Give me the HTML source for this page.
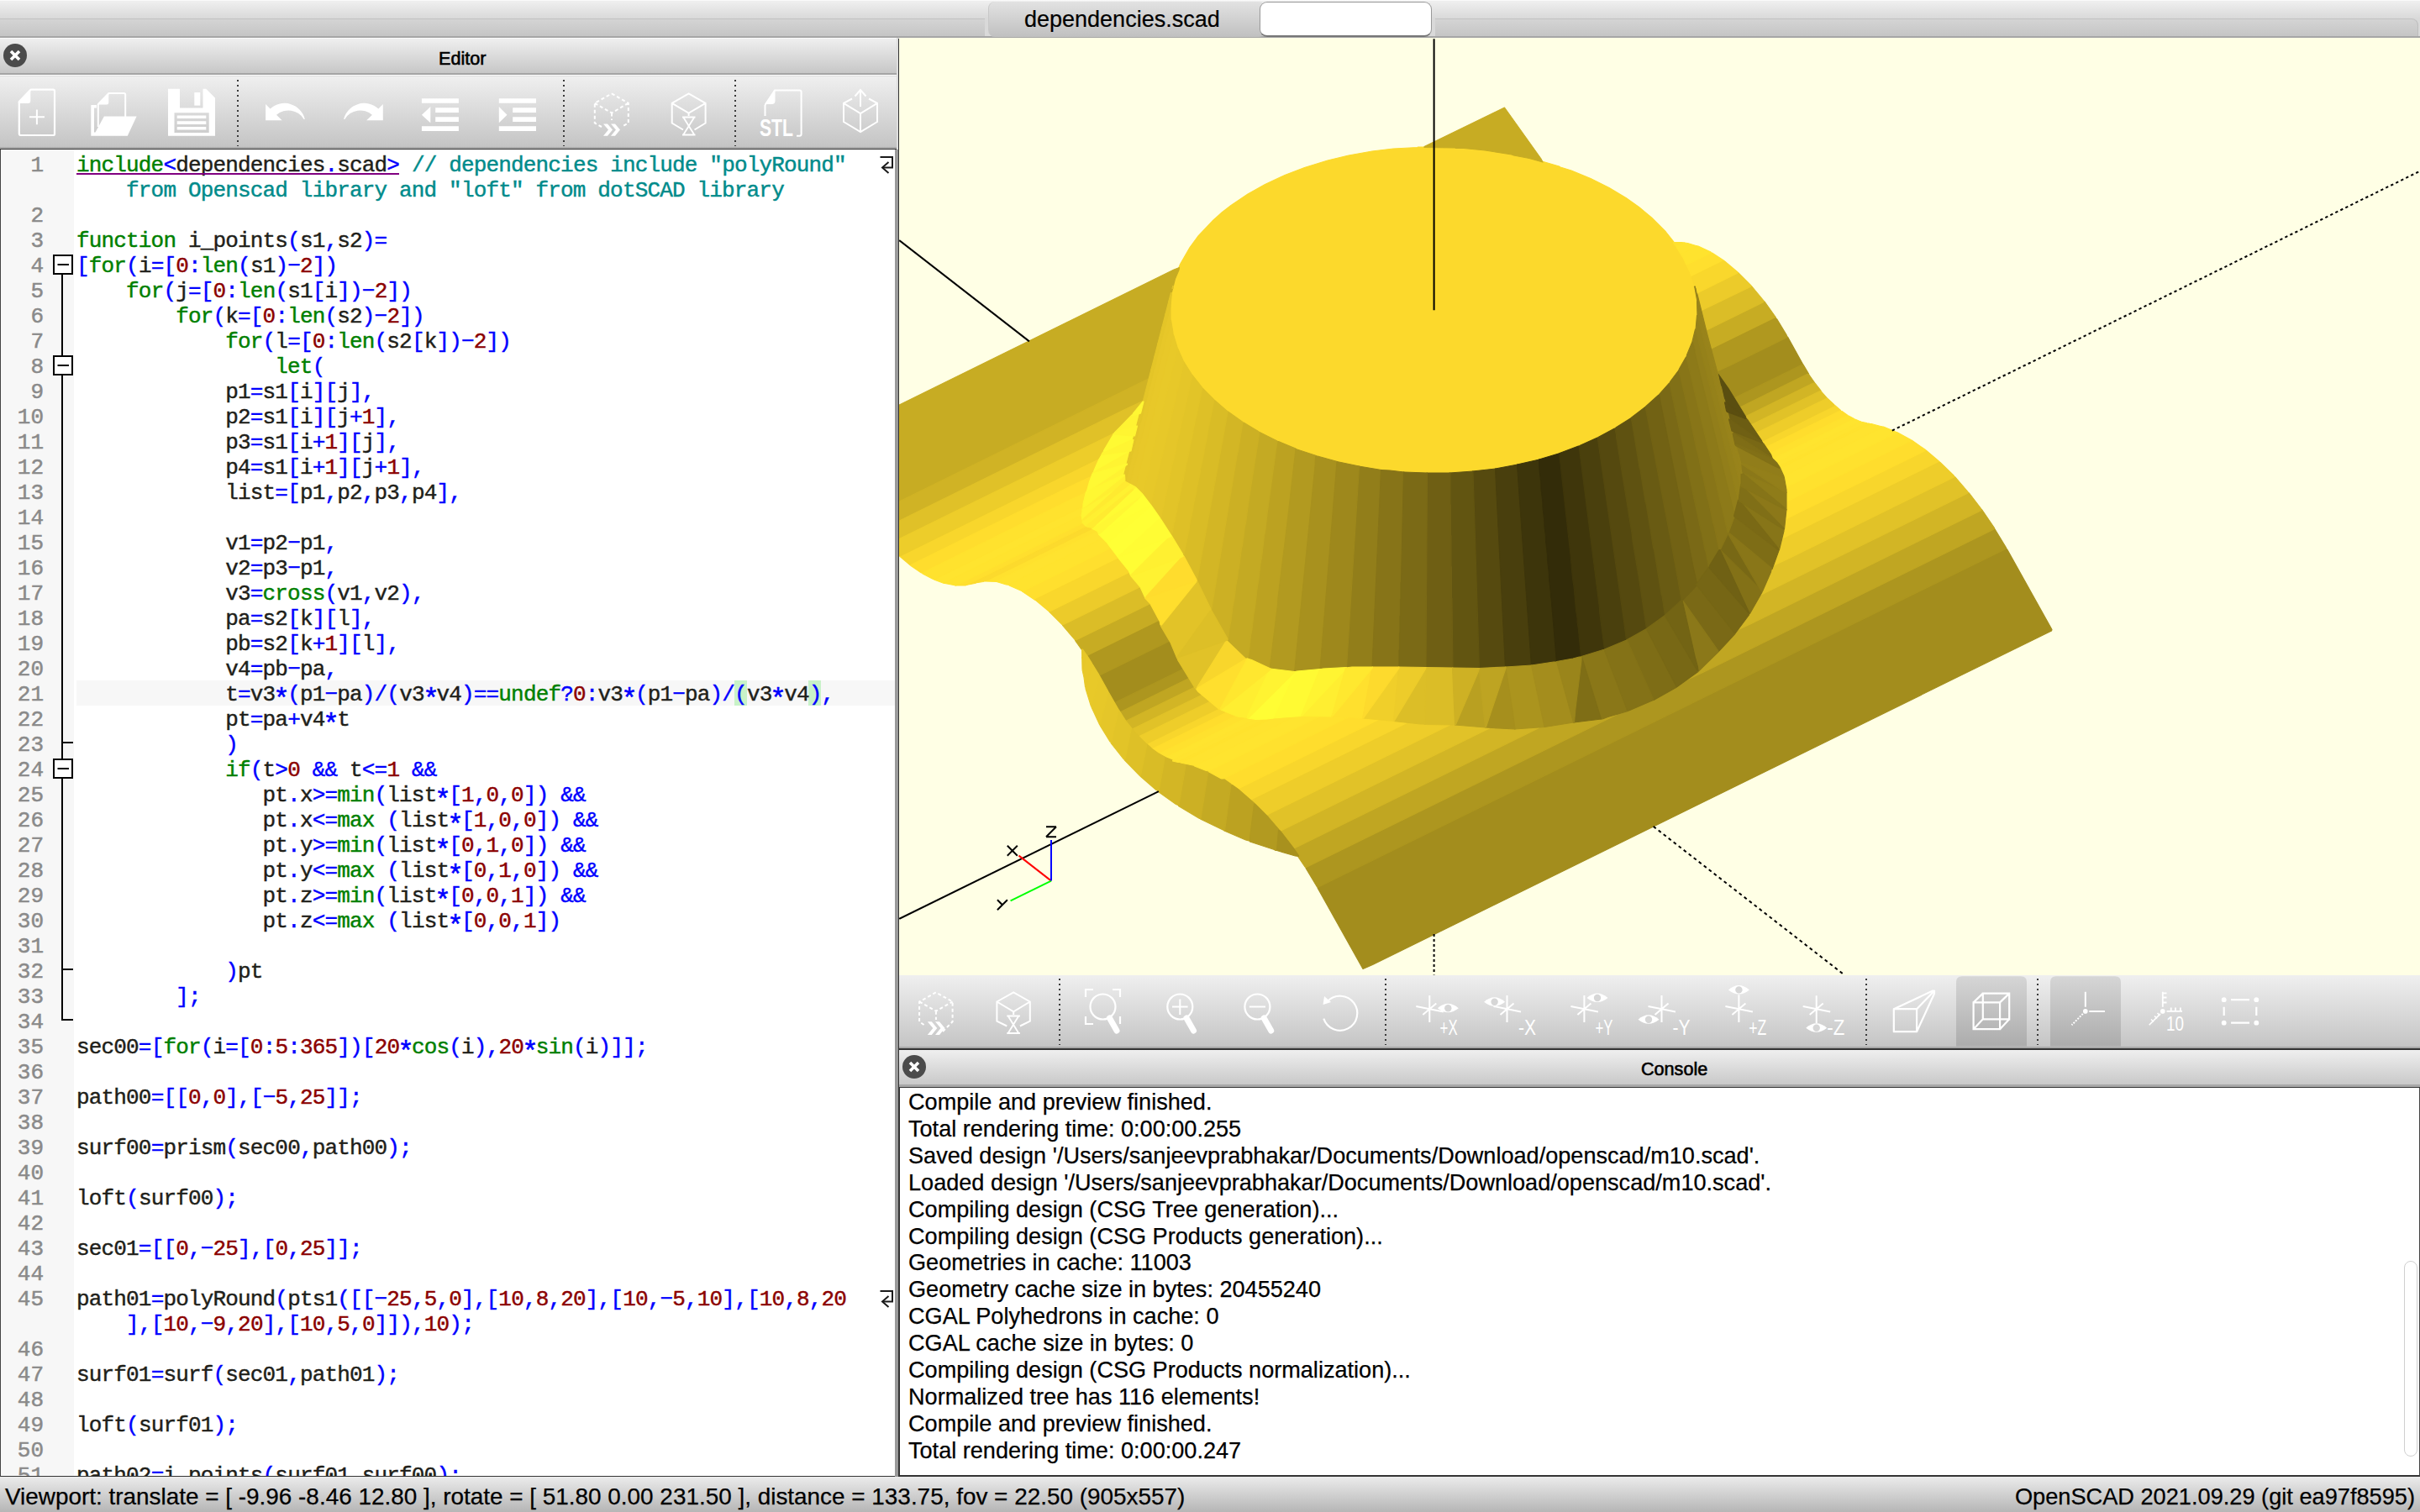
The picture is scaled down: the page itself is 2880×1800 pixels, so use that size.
<!DOCTYPE html><html><head><meta charset="utf-8"><style>
*{margin:0;padding:0;box-sizing:border-box}
body{width:2880px;height:1800px;overflow:hidden;position:relative;background:#e6e6e6;font-family:"Liberation Sans",sans-serif;color:#000}
.a{position:absolute}
.grad{background:linear-gradient(#efefef,#c6c6c6)}
.code{font-family:"Liberation Mono",monospace;font-size:26px;letter-spacing:-0.8323px;white-space:pre;color:#1f1f1a;line-height:30px;-webkit-text-stroke:0.45px currentColor}
.code i{font-style:normal}
.ast{display:inline-block;transform:translateY(6.5px) scale(1.25)}
.kw{color:#008000} .op{color:#0000ff} .num{color:#8b0000} .cm{color:#008b8b}
.ln{font-family:"Liberation Mono",monospace;font-size:26px;color:#8a8a8a;text-align:right;width:51px;white-space:pre;line-height:30px;-webkit-text-stroke:0.5px #8a8a8a}
.cons{font-size:27.1px;line-height:31.9px;white-space:pre;color:#000;-webkit-text-stroke:0.25px #000}
.stat{font-size:27.9px;white-space:pre;color:#000;-webkit-text-stroke:0.25px #000}
.title{font-size:21.6px;color:#000;white-space:pre;-webkit-text-stroke:0.6px #000}
</style></head><body><div class="a" style="left:0;top:0;width:2880px;height:45px;background:linear-gradient(#ffffff 0px,#efefef 1.5px,#d9d9d9 22px,#d9d9d9 45px)"></div>
<div class="a" style="left:0;top:22px;width:1172px;height:22px;background:linear-gradient(#d4d4d4,#c4c4c4);border-top:1px solid #c2c2c2"></div>
<div class="a" style="left:1708px;top:22px;width:1170px;height:22px;background:linear-gradient(#d4d4d4,#c4c4c4);border-top:1px solid #c2c2c2;border-right:1px solid #bdbdbd;border-top-right-radius:8px"></div>
<div class="a" style="left:0;top:43px;width:2880px;height:2px;background:#a6a6a6"></div>
<div class="a" style="left:1176px;top:2px;width:330px;height:42px;border-radius:8px;background:linear-gradient(#e2e2e2,#c0c0c0);border-left:1px solid #c8c8c8"></div>
<div class="a" style="left:1499px;top:2px;width:205px;height:42px;border-radius:9px;background:#fff;border:1.5px solid #999;border-bottom:2px solid #777"></div>
<div class="a" style="left:1219px;top:8px;font-size:27px;-webkit-text-stroke:0.2px #000;white-space:pre">dependencies.scad</div>
<div class="a" style="left:0;top:45px;width:1070px;height:1713px;background:#ddd"></div>
<div class="a grad" style="left:0;top:45px;width:1067px;height:43px;border-top:1px solid #fafafa"></div>
<div class="a" style="left:0;top:87px;width:1067px;height:3px;background:#a4a4a4;border-bottom:1px solid #fff"></div>
<div class="a grad" style="left:0;top:91px;width:1067px;height:85px;background:linear-gradient(#efefef,#c4c4c4)"></div>
<div class="a" style="left:0;top:175px;width:1067px;height:3px;background:#aaa;border-bottom:1.5px solid #333"></div>
<div class="a" style="left:4px;top:52px;width:28px;height:28px;border-radius:50%;background:#4b4b4b"></div>
<svg class="a" style="left:4px;top:52px" width="28" height="28"><path d="M9 9 L19 19 M19 9 L9 19" stroke="#fff" stroke-width="3.6"/></svg>
<div class="a title" style="left:522px;top:56.5px">Editor</div>
<svg class="a" style="left:0;top:0" width="1070" height="180"><path d="M22.8 121 L36.6 106.7 H63 Q65 106.7 65 108.7 V159.8 Q65 161 63 161 H24.8 Q22.8 161 22.8 159 Z" fill="none" stroke="#ffffff" stroke-width="2.2" stroke-linejoin="round"/><path d="M21.8 121 L36.3 105.7 V120 Q36.3 123 33.5 123 H21.8 Z" fill="#ffffff"/><path d="M35 139.3 H53 M43.9 130.5 V148.3" stroke="#ffffff" stroke-width="2"/><path d="M116.8 124 L129.5 111 H147.5 Q149.2 111 149.2 112.7 V139" fill="none" stroke="#ffffff" stroke-width="2"/><path d="M115.8 124 L129.3 110 V122 Q129.3 124.5 126.8 124.5 H115.8 Z" fill="#ffffff"/><path d="M116.8 124 V151" stroke="#ffffff" stroke-width="2"/><path d="M108.3 125 H115 V128.5 H112 V157.5 H113.5 L123.9 138.5 H162.6 L151.8 161.8 H108.3 Z" fill="#ffffff"/><path d="M200 105.7 H214 V128.5 H241.5 V105.7 H245.3 L256 116.5 V161.8 H200 Z M207.5 134.2 V157.9 H248.7 V134.2 Z" fill="#ffffff" fill-rule="evenodd"/><rect x="231.3" y="110" width="7" height="15.6" fill="#ffffff"/><path d="M210.7 137.4 h34.6 v3.6 h-34.6 Z M210.7 144.2 h34.6 v3.7 h-34.6 Z M210.7 151 h34.6 v3.6 h-34.6 Z" fill="#ffffff"/><line x1="283" y1="95" x2="283" y2="174" stroke="#3a3a3a" stroke-width="2" stroke-dasharray="2 4"/><path d="M316.1 124 L321.6 129.4 A 25 25 0 0 1 362.8 141.9 L361.6 141.9 A 21.5 21.5 0 0 0 329 136.7 L335.7 143.3 L316.1 143.3 Z" fill="#ffffff"/><path d="M316.1 124 L321.6 129.4 A 25 25 0 0 1 362.8 141.9 L361.6 141.9 A 21.5 21.5 0 0 0 329 136.7 L335.7 143.3 L316.1 143.3 Z" fill="#ffffff" transform="translate(771.9 0) scale(-1 1)"/><path d="M501.9 117.3 h44 v5.5 h-44 Z M501.9 150.3 h44 v5.7 h-44 Z M518.2 128.2 h27.7 v5.8 h-27.7 Z M518.2 139.2 h27.7 v5.8 h-27.7 Z M512.3 127 V146.3 L501.9 136.7 Z" fill="#ffffff"/><path d="M593.8 117.3 h44.2 v5.5 h-44.2 Z M593.8 150.3 h44.2 v5.7 h-44.2 Z M610.2 128.2 h27.8 v5.8 h-27.8 Z M610.2 139.2 h27.8 v5.8 h-27.8 Z M593.8 127 V146.3 L603.5 136.7 Z" fill="#ffffff"/><line x1="671" y1="95" x2="671" y2="174" stroke="#3a3a3a" stroke-width="2" stroke-dasharray="2 4"/><path d="M728 111.4 L747.8 122.8 V146.5 L740 151 M716 151 L707.8 146.5 V122.8 L728 111.4 M707.8 122.8 L728 134.4 L747.8 122.8 M728 134.4 V143" fill="none" stroke="#ffffff" stroke-width="2" stroke-dasharray="4 3"/><path d="M718 147.5 h5 l6 7 l-6 7.2 h-5 l6 -7.2 Z M727 147.5 h5 l6 7 l-6 7.2 h-5 l6 -7.2 Z" fill="#ffffff"/><path d="M813 154.5 L799.7 146.5 V122.8 L819.6 111.4 L839.6 122.8 V146.5 L826.5 154.5 M799.7 122.8 L819.6 134.6 L839.6 122.8 M819.6 134.6 V138" fill="none" stroke="#ffffff" stroke-width="2"/><path d="M812 139.5 H827.5 M812 160.5 H827.5 M813.5 140 L826 160 M826 140 L813.5 160" stroke="#ffffff" stroke-width="1.8" fill="none"/><line x1="875" y1="95" x2="875" y2="174" stroke="#3a3a3a" stroke-width="2" stroke-dasharray="2 4"/><path d="M910.5 125 L922 107.6 H951.6 Q953.6 107.6 953.6 109.6 V159.7 Q953.6 161.7 951.6 161.7 H948" fill="none" stroke="#ffffff" stroke-width="2"/><path d="M910 124 L922.5 107 V120 Q922.5 124 918.5 124 Z" fill="#ffffff"/><path d="M910.5 125 V138" stroke="#ffffff" stroke-width="2"/><text x="904" y="161.7" font-family="Liberation Sans" font-weight="bold" font-size="29" fill="#ffffff" textLength="40" lengthAdjust="spacingAndGlyphs">STL</text><path d="M1014 117.5 L1004 122.8 V145 L1024 157 L1044 145 V122.8 L1034 117.5 M1004 122.8 L1024 135 L1044 122.8 M1024 135 V157 M1024 127 V108.5" fill="none" stroke="#ffffff" stroke-width="2"/><path d="M1017.5 114.5 L1024 107 L1030.5 114.5" fill="none" stroke="#ffffff" stroke-width="2"/></svg>
<div class="a" style="left:0;top:178px;width:1069px;height:1581px;background:#fff;border-left:1.5px solid #444;border-bottom:2px solid #333;overflow:hidden">
<div class="a" style="left:0;top:0;width:86.5px;height:1580px;background:#f7f7f7"></div>
<div class="a" style="left:90px;top:632px;width:975px;height:30px;background:#f7f7f7"></div>
<div class="a" style="left:872.8px;top:632px;width:14.77px;height:30px;background:#c8f2c8"></div>
<div class="a" style="left:961.4px;top:632px;width:14.77px;height:30px;background:#c8f2c8"></div>
<div class="a ln" style="left:0;top:4px">1

2
3
4
5
6
7
8
9
10
11
12
13
14
15
16
17
18
19
20
21
22
23
24
25
26
27
28
29
30
31
32
33
34
35
36
37
38
39
40
41
42
43
44
45

46
47
48
49
50
51</div>
<div class="a code" style="left:90px;top:4px"><i class="kw">include</i><i class="op">&lt;</i>dependencies<i class="op">.</i>scad<i class="op">&gt;</i> <i class="cm">// dependencies include &quot;polyRound&quot;</i>
<i class="cm">    from Openscad library and &quot;loft&quot; from dotSCAD library</i>

<i class="kw">function</i> i_points<i class="op">(</i>s1<i class="op">,</i>s2<i class="op">)</i><i class="op">=</i>
<i class="op">[</i><i class="kw">for</i><i class="op">(</i>i<i class="op">=</i><i class="op">[</i><i class="num">0</i><i class="op">:</i><i class="kw">len</i><i class="op">(</i>s1<i class="op">)</i><i class="op">−</i><i class="num">2</i><i class="op">]</i><i class="op">)</i>
    <i class="kw">for</i><i class="op">(</i>j<i class="op">=</i><i class="op">[</i><i class="num">0</i><i class="op">:</i><i class="kw">len</i><i class="op">(</i>s1<i class="op">[</i>i<i class="op">]</i><i class="op">)</i><i class="op">−</i><i class="num">2</i><i class="op">]</i><i class="op">)</i>
        <i class="kw">for</i><i class="op">(</i>k<i class="op">=</i><i class="op">[</i><i class="num">0</i><i class="op">:</i><i class="kw">len</i><i class="op">(</i>s2<i class="op">)</i><i class="op">−</i><i class="num">2</i><i class="op">]</i><i class="op">)</i>
            <i class="kw">for</i><i class="op">(</i>l<i class="op">=</i><i class="op">[</i><i class="num">0</i><i class="op">:</i><i class="kw">len</i><i class="op">(</i>s2<i class="op">[</i>k<i class="op">]</i><i class="op">)</i><i class="op">−</i><i class="num">2</i><i class="op">]</i><i class="op">)</i>
                <i class="kw">let</i><i class="op">(</i>
            p1<i class="op">=</i>s1<i class="op">[</i>i<i class="op">]</i><i class="op">[</i>j<i class="op">]</i><i class="op">,</i>
            p2<i class="op">=</i>s1<i class="op">[</i>i<i class="op">]</i><i class="op">[</i>j<i class="op">+</i><i class="num">1</i><i class="op">]</i><i class="op">,</i>
            p3<i class="op">=</i>s1<i class="op">[</i>i<i class="op">+</i><i class="num">1</i><i class="op">]</i><i class="op">[</i>j<i class="op">]</i><i class="op">,</i>
            p4<i class="op">=</i>s1<i class="op">[</i>i<i class="op">+</i><i class="num">1</i><i class="op">]</i><i class="op">[</i>j<i class="op">+</i><i class="num">1</i><i class="op">]</i><i class="op">,</i>
            list<i class="op">=</i><i class="op">[</i>p1<i class="op">,</i>p2<i class="op">,</i>p3<i class="op">,</i>p4<i class="op">]</i><i class="op">,</i>

            v1<i class="op">=</i>p2<i class="op">−</i>p1<i class="op">,</i>
            v2<i class="op">=</i>p3<i class="op">−</i>p1<i class="op">,</i>
            v3<i class="op">=</i><i class="kw">cross</i><i class="op">(</i>v1<i class="op">,</i>v2<i class="op">)</i><i class="op">,</i>
            pa<i class="op">=</i>s2<i class="op">[</i>k<i class="op">]</i><i class="op">[</i>l<i class="op">]</i><i class="op">,</i>
            pb<i class="op">=</i>s2<i class="op">[</i>k<i class="op">+</i><i class="num">1</i><i class="op">]</i><i class="op">[</i>l<i class="op">]</i><i class="op">,</i>
            v4<i class="op">=</i>pb<i class="op">−</i>pa<i class="op">,</i>
            t<i class="op">=</i>v3<i class="op ast">*</i><i class="op">(</i>p1<i class="op">−</i>pa<i class="op">)</i><i class="op">/</i><i class="op">(</i>v3<i class="op ast">*</i>v4<i class="op">)</i><i class="op">=</i><i class="op">=</i><i class="kw">undef</i><i class="op">?</i><i class="num">0</i><i class="op">:</i>v3<i class="op ast">*</i><i class="op">(</i>p1<i class="op">−</i>pa<i class="op">)</i><i class="op">/</i><i class="op">(</i>v3<i class="op ast">*</i>v4<i class="op">)</i><i class="op">,</i>
            pt<i class="op">=</i>pa<i class="op">+</i>v4<i class="op ast">*</i>t
            <i class="op">)</i>
            <i class="kw">if</i><i class="op">(</i>t<i class="op">&gt;</i><i class="num">0</i> <i class="op">&amp;</i><i class="op">&amp;</i> t<i class="op">&lt;</i><i class="op">=</i><i class="num">1</i> <i class="op">&amp;</i><i class="op">&amp;</i>
               pt<i class="op">.</i>x<i class="op">&gt;</i><i class="op">=</i><i class="kw">min</i><i class="op">(</i>list<i class="op ast">*</i><i class="op">[</i><i class="num">1</i><i class="op">,</i><i class="num">0</i><i class="op">,</i><i class="num">0</i><i class="op">]</i><i class="op">)</i> <i class="op">&amp;</i><i class="op">&amp;</i>
               pt<i class="op">.</i>x<i class="op">&lt;</i><i class="op">=</i><i class="kw">max</i> <i class="op">(</i>list<i class="op ast">*</i><i class="op">[</i><i class="num">1</i><i class="op">,</i><i class="num">0</i><i class="op">,</i><i class="num">0</i><i class="op">]</i><i class="op">)</i> <i class="op">&amp;</i><i class="op">&amp;</i>
               pt<i class="op">.</i>y<i class="op">&gt;</i><i class="op">=</i><i class="kw">min</i><i class="op">(</i>list<i class="op ast">*</i><i class="op">[</i><i class="num">0</i><i class="op">,</i><i class="num">1</i><i class="op">,</i><i class="num">0</i><i class="op">]</i><i class="op">)</i> <i class="op">&amp;</i><i class="op">&amp;</i>
               pt<i class="op">.</i>y<i class="op">&lt;</i><i class="op">=</i><i class="kw">max</i> <i class="op">(</i>list<i class="op ast">*</i><i class="op">[</i><i class="num">0</i><i class="op">,</i><i class="num">1</i><i class="op">,</i><i class="num">0</i><i class="op">]</i><i class="op">)</i> <i class="op">&amp;</i><i class="op">&amp;</i>
               pt<i class="op">.</i>z<i class="op">&gt;</i><i class="op">=</i><i class="kw">min</i><i class="op">(</i>list<i class="op ast">*</i><i class="op">[</i><i class="num">0</i><i class="op">,</i><i class="num">0</i><i class="op">,</i><i class="num">1</i><i class="op">]</i><i class="op">)</i> <i class="op">&amp;</i><i class="op">&amp;</i>
               pt<i class="op">.</i>z<i class="op">&lt;</i><i class="op">=</i><i class="kw">max</i> <i class="op">(</i>list<i class="op ast">*</i><i class="op">[</i><i class="num">0</i><i class="op">,</i><i class="num">0</i><i class="op">,</i><i class="num">1</i><i class="op">]</i><i class="op">)</i>

            <i class="op">)</i>pt
        <i class="op">]</i><i class="op">;</i>

sec00<i class="op">=</i><i class="op">[</i><i class="kw">for</i><i class="op">(</i>i<i class="op">=</i><i class="op">[</i><i class="num">0</i><i class="op">:</i><i class="num">5</i><i class="op">:</i><i class="num">365</i><i class="op">]</i><i class="op">)</i><i class="op">[</i><i class="num">20</i><i class="op ast">*</i><i class="kw">cos</i><i class="op">(</i>i<i class="op">)</i><i class="op">,</i><i class="num">20</i><i class="op ast">*</i><i class="kw">sin</i><i class="op">(</i>i<i class="op">)</i><i class="op">]</i><i class="op">]</i><i class="op">;</i>

path00<i class="op">=</i><i class="op">[</i><i class="op">[</i><i class="num">0</i><i class="op">,</i><i class="num">0</i><i class="op">]</i><i class="op">,</i><i class="op">[</i><i class="op">−</i><i class="num">5</i><i class="op">,</i><i class="num">25</i><i class="op">]</i><i class="op">]</i><i class="op">;</i>

surf00<i class="op">=</i>prism<i class="op">(</i>sec00<i class="op">,</i>path00<i class="op">)</i><i class="op">;</i>

loft<i class="op">(</i>surf00<i class="op">)</i><i class="op">;</i>

sec01<i class="op">=</i><i class="op">[</i><i class="op">[</i><i class="num">0</i><i class="op">,</i><i class="op">−</i><i class="num">25</i><i class="op">]</i><i class="op">,</i><i class="op">[</i><i class="num">0</i><i class="op">,</i><i class="num">25</i><i class="op">]</i><i class="op">]</i><i class="op">;</i>

path01<i class="op">=</i>polyRound<i class="op">(</i>pts1<i class="op">(</i><i class="op">[</i><i class="op">[</i><i class="op">−</i><i class="num">25</i><i class="op">,</i><i class="num">5</i><i class="op">,</i><i class="num">0</i><i class="op">]</i><i class="op">,</i><i class="op">[</i><i class="num">10</i><i class="op">,</i><i class="num">8</i><i class="op">,</i><i class="num">20</i><i class="op">]</i><i class="op">,</i><i class="op">[</i><i class="num">10</i><i class="op">,</i><i class="op">−</i><i class="num">5</i><i class="op">,</i><i class="num">10</i><i class="op">]</i><i class="op">,</i><i class="op">[</i><i class="num">10</i><i class="op">,</i><i class="num">8</i><i class="op">,</i><i class="num">20</i>
    <i class="op">]</i><i class="op">,</i><i class="op">[</i><i class="num">10</i><i class="op">,</i><i class="op">−</i><i class="num">9</i><i class="op">,</i><i class="num">20</i><i class="op">]</i><i class="op">,</i><i class="op">[</i><i class="num">10</i><i class="op">,</i><i class="num">5</i><i class="op">,</i><i class="num">0</i><i class="op">]</i><i class="op">]</i><i class="op">)</i><i class="op">,</i><i class="num">10</i><i class="op">)</i><i class="op">;</i>

surf01<i class="op">=</i>surf<i class="op">(</i>sec01<i class="op">,</i>path01<i class="op">)</i><i class="op">;</i>

loft<i class="op">(</i>surf01<i class="op">)</i><i class="op">;</i>

path02<i class="op">=</i>i_points<i class="op">(</i>surf01<i class="op">,</i>surf00<i class="op">)</i><i class="op">;</i></div>
<div class="a" style="left:90px;top:28px;width:384.0px;height:2px;background:#800080"></div>
</div>
<svg class="a" style="left:0;top:0" width="1070" height="1760"><path d="M74 326 V1214 H87 M74 884 H87 M74 1154 H87" fill="none" stroke="#000" stroke-width="2"/><rect x="64" y="304" width="22" height="22" fill="#fff" stroke="#000" stroke-width="2"/><path d="M68.5 315 H82" stroke="#000" stroke-width="2"/><rect x="64" y="424" width="22" height="22" fill="#fff" stroke="#000" stroke-width="2"/><path d="M68.5 435 H82" stroke="#000" stroke-width="2"/><rect x="64" y="904" width="22" height="22" fill="#fff" stroke="#000" stroke-width="2"/><path d="M68.5 915 H82" stroke="#000" stroke-width="2"/><path d="M1047.5 187 H1062 V199.5 H1050" fill="none" stroke="#1a1a1a" stroke-width="2"/><path d="M1057.5 193 L1050 199.5 L1057.5 206" fill="none" stroke="#1a1a1a" stroke-width="2"/><path d="M1047.5 1537 H1062 V1549.5 H1050" fill="none" stroke="#1a1a1a" stroke-width="2"/><path d="M1057.5 1543 L1050 1549.5 L1057.5 1556" fill="none" stroke="#1a1a1a" stroke-width="2"/></svg>
<div class="a" style="left:1065px;top:178px;width:3.5px;height:1580px;background:#9a9a9a"></div>
<div class="a" style="left:1068.5px;top:46px;width:2px;height:1712px;background:#333"></div>
<div class="a" style="left:1070px;top:45px;width:1810px;height:1116px;background:#ffffe5;overflow:hidden">
<svg class="a" style="left:0;top:1px" width="1810" height="1115" viewBox="0 0 1810 1115"><g stroke-width="1.1" stroke-linejoin="round"><path fill="#fcd92c" stroke="#fcd92c" d="M217.5 736.5 217.5 737.5 218.5 737.5 218.5 736.5ZM225 580.5 223 579.5 219.5 580.5 79.5 649.5 79.5 650.5 90 648.5 225 582ZM328 285 325.5 296.5 324 300.5 322 318 322.5 319.5 322.5 335.5 325.5 353 331 370 338.5 386 349 402.5 360 416.5 376.5 433 390 444.5 407.5 457 427.5 469 449.5 480 472.5 489.5 497.5 498 523.5 505 547.5 510 566.5 512.5 573 514 583 514.5 598.5 516.5 619 517 619.5 517.5 657 517.5 657.5 517 680 516 694 514.5 702.5 513 710.5 512.5 719 510.5 733 508.5 763 501.5 789 493.5 810.5 485.5 834.5 474.5 857 462 872.5 452 883 444 902 427.5 918 410 928.5 395.5 938 378.5 944 363.5 948.5 346.5 950.5 330 950 310 947.5 295.5 942 277.5 934 260.5 924 244.5 912.5 230 895.5 213 880.5 200.5 865 189.5 845 177.5 823 166.5 800 157 787 153 785.5 152 753 142.5 725 136.5 698.5 132.5 673 130 652 129.5 651.5 129 617.5 129 617 129.5 588 131 563 134 535 139 510 145 482.5 153.5 459 162.5 435.5 173.5 415 185 395 198.5 384 207 374 216 355.5 235.5 346 248.5 334.5 268.5Z"/>
<path fill="#a38d1d" stroke="#a38d1d" d="M322.5 716 308 722.5 237.5 757.5 237.5 759 255.5 791.5 260.5 790 339 751 338.5 748.5 330 734.5ZM1319 608.5 1317.5 606.5 1316.5 606.5 498.5 1009 498 1011 552 1107.5 563.5 1102.5 1371.5 705 1372 703.5ZM1057.5 355 1055.5 355 973 395.5 973.5 399.5 983.5 413 993 428.5 995 428.5 1075.5 389 1075.5 387.5Z"/>
<path fill="#c7ac23" stroke="#c7ac23" d="M310.5 692.5 299.5 672 297.5 672 210 715 209.5 716.5 223 735.5 225.5 736 310 694.5ZM1043.5 332 1030 313 1028.5 312.5 960 346 960 348 966 371 967.5 371 1043 334ZM333.5 272.5 327 275 0 436 0 552 298 405.5 328.5 286 333 275.5ZM766 147 764 143 720.5 82 625 128.5 625 129.5 662 130 662.5 130.5 672 130.5 697.5 133 729 138 731.5 139 750 142.5Z"/>
<path fill="#ad961f" stroke="#ad961f" d="M346 761 340 751 338 750.5 256.5 790.5 256 792 261.5 801.5 262.5 802.5 264 802.5 345.5 762.5ZM1317.5 606 1303.5 583 1302.5 583 934.5 764 924.5 771.5 897 787 866.5 800 854 803.5 484 985.5 484 987.5 497.5 1010 499 1010 1317 607.5ZM1082.5 399 1076 388 1075 388 993.5 428 993.5 429.5 999.5 439.5 1001 440 1082.5 400Z"/>
<path fill="#c0a622" stroke="#c0a622" d="M853.5 804 833.5 810 801.5 813.5 768 819 762 819 468.5 963.5 468.5 964.5 483 986 484.5 986.5 853.5 805ZM352.5 771.5 346.5 761.5 345 761.5 262.5 802 262.5 803 269.5 813 271 813 352.5 773ZM1303.5 582.5 1288.5 560.5 1287.5 560.5 997 703.5 994.5 707.5 975 728.5 949 754 936 763 936 764 954.5 755.5 1303 584ZM1089.5 409.5 1082.5 399.5 1080.5 399.5 1000.5 439 1000.5 441 1006 450 1008 450.5 1089.5 410.5Z"/>
<path fill="#d2b525" stroke="#d2b525" d="M761.5 819.5 755 819.5 754.5 820 748 820 733.5 821.5 702 820 453 942.5 453 944.5 466.5 962 468.5 964 470 964 761.5 820.5ZM361.5 780.5 356.5 776.5 353 772.5 351 772.5 269.5 812.5 269.5 813.5 276.5 822.5 278 823 361.5 782ZM1288 560 1273.5 541 1271.5 540 1052.5 647.5 1024 662 1012 683.5 998.5 701.5 997.5 704 1014 696.5 1288 561.5ZM1097 419 1090 410 1088 410 1007 450 1007.5 453 1009.5 455 1012.5 460 1015 460.5 1096.5 420.5Z"/>
<path fill="#e1c228" stroke="#e1c228" d="M702.5 820 672.5 817.5 667 816.5 655 816 436.5 923.5 436 925 452.5 943.5 453.5 943.5 702.5 821ZM371 788.5 363.5 782 361 781 277.5 822 277.5 823.5 284.5 831.5 286.5 831.5 371 790ZM391 715.5 389 715.5 331 736.5 331.5 739.5 352 773 353.5 774.5 355 774 390.5 717.5ZM1272 539.5 1257 522 1255 521 1039.5 627 1038.5 630.5 1024.5 662 1026 662 1272 541ZM270.5 508 270.5 509 271.5 509 271.5 508ZM271 506 271 507 272 507 272 506ZM275 490.5 275 491.5 276 491.5 276 490.5ZM275.5 488.5 275.5 489.5 276.5 489.5 276.5 488.5ZM279 475 279 476 280 476 280 475ZM279.5 473 279.5 474 280.5 474 280.5 473ZM283 459.5 283 460.5 284 460.5 284 459.5ZM283.5 457.5 283.5 458.5 284.5 458.5 284.5 457.5ZM287.5 442 287.5 443 288.5 443 288.5 442ZM288 440 288 441 289 441 289 440ZM291.5 426.5 291.5 427.5 292.5 427.5 292.5 426.5ZM292 424.5 292 425.5 293 425.5 293 424.5ZM1104.5 428 1097 419.5 1096 419.5 1013.5 460 1013.5 461.5 1019.5 470.5 1020.5 470.5 1104 429.5ZM295.5 411 295.5 412 296.5 412 296.5 411ZM296 409 296 410 297 410 297 409ZM300 393.5 300 394.5 301 394.5 301 393.5ZM300.5 391.5 300.5 392.5 301.5 392.5 301.5 391.5ZM304 378 304 379 305 379 305 378ZM304.5 376 304.5 377 305.5 377 305.5 376ZM308 362.5 308 363.5 309 363.5 309 362.5ZM308.5 360.5 308.5 361.5 309.5 361.5 309.5 360.5ZM312.5 345 312.5 346 313.5 346 313.5 345ZM313 343 313 344 314 344 314 343ZM316.5 329.5 316.5 330.5 317.5 330.5 317.5 329.5ZM317 327.5 317 328.5 318 328.5 318 327.5ZM321 312 321 313 322 313 322 312ZM325 296.5 325 297.5 326 297.5 326 296.5ZM325.5 294.5 325.5 295.5 326.5 295.5 326.5 294.5Z"/>
<path fill="#f8d62c" stroke="#f8d62c" d="M608.5 814 569.5 810 402 892.5 402 894 417.5 907 420.5 907.5 608.5 815ZM391.5 801.5 386.5 800 379.5 796.5 293 839 293 840 300 846 302 846.5 391.5 802.5ZM415 737.5 391.5 715 390.5 715 355 771.5 354 774.5 357 773.5 415 738.5ZM240 498 238.5 498 14.5 608 0.5 615 0.5 616 13.5 627 15.5 627 214 529.5 230 521ZM1238.5 504 1222 490 1220 490 1073.5 562 1054 572 1053 583 1049.5 597.5 1051 597.5 1238 505.5ZM1120.5 442.5 1113 436 1112 436 1026 478.5 1026 480 1031 487.5 1032 487.5 1120.5 444Z"/>
<path fill="#eecd2a" stroke="#eecd2a" d="M655.5 816 627 816 608 814 419 907 419 908 435.5 924.5 437 924.5 655.5 817ZM380 796 372.5 789.5 370.5 789 285 831 285 832 292.5 839.5 294.5 839.5 380 797.5ZM1255.5 520.5 1239 504.5 1237.5 504.5 1049.5 597 1047 608 1040 625.5 1040 627.5 1059.5 618.5 1255.5 522ZM1112.5 435.5 1105 428.5 1103.5 428.5 1020 469.5 1020 471 1025 478.5 1027.5 479 1112.5 437Z"/>
<path fill="#ffdd2d" stroke="#ffdd2d" d="M570 810 533 807.5 384.5 880.5 384.5 881.5 398.5 891.5 402.5 893.5 570 811ZM402 806 394 802.5 390 802 301.5 845.5 301.5 847 308.5 852 310.5 852 402 807ZM229.5 521 212 529 14 626.5 14 627.5 26.5 636 29 636.5 223 541ZM1221.5 489.5 1205 478 1203 478 1055.5 550.5 1055.5 563.5 1054 572.5 1221.5 490.5ZM1129 448.5 1122 443.5 1120 443 1031.5 486.5 1031.5 488 1036 494.5 1037.5 494.5 1129 449.5Z"/>
<path fill="#927e1a" stroke="#927e1a" d="M547 509 546.5 511.5 546.5 519 546 519.5 546 527 545.5 527.5 545.5 535 545 535.5 545 543 544.5 543.5 544.5 551 544 551.5 542 591 541 599 532 749 563.5 748.5 564 746.5 564 735.5 564.5 735 564.5 724 565 723.5 565 713 565.5 712.5 565.5 701.5 566 701 566 690 566.5 689.5 566.5 678.5 567 678 574 513.5ZM947.5 346 943.5 362.5 992 561 992 563 993.5 568 994.5 568 999.5 549 949 346Z"/>
<path fill="#bca221" stroke="#bca221" d="M394.5 888 387 943 412.5 954 418 955.5 423 910.5 403.5 893.5 396.5 888.5ZM451.5 479.5 449 479.5 449 483 437.5 565 435.5 583.5 434 591 427.5 643 426 650.5 423 676.5 414.5 736 414.5 738.5 440.5 750.5 442 750.5 451.5 666.5 452.5 662 452.5 658 453.5 653.5 453.5 649.5 454.5 645 463 568.5 472.5 491.5 472 488Z"/>
<path fill="#b29a20" stroke="#b29a20" d="M422.5 911 417.5 951 417.5 956 446.5 965.5 448 966.5 450 966.5 452 941.5 439.5 927 423.5 911ZM472 488.5 462 576 451 665.5 450.5 674 441.5 746.5 442 751 471 754 482.5 640.5 482.5 635.5 496.5 496.5Z"/>
<path fill="#c4aa23" stroke="#c4aa23" d="M367 871.5 358.5 929 387.5 943 395 887.5 385 880.5 369.5 872ZM429 468.5 428 468.5 425 490 423 500 421 516.5 419 526.5 417 543 416 546.5 405 622.5 391 712 391 716 414 738 415 738 416.5 729.5 418.5 711 420 703.5 422 685 423.5 677.5 426.5 651.5 428 644 430 625.5 431.5 618 434.5 592 436 584.5 438 566 450 479Z"/>
<path fill="#ffe12e" stroke="#ffe12e" d="M533.5 807.5 523 807 522.5 806.5 500 806 368 871 368 872.5 383.5 881 386 881 533.5 808.5ZM415 808 408.5 807.5 401.5 806 310 851 309.5 852.5 316.5 856.5 318.5 856.5 415 809ZM237 586 231 582.5 227.5 583 102.5 644.5 102 646 116.5 646.5 236.5 587.5ZM1204 477.5 1187.5 468.5 1185 469 1054.5 533.5 1055.5 538 1055.5 551 1057 551 1193.5 484 1203.5 479ZM1136.5 452.5 1130 449 1127.5 449 1036 494 1036 495 1039 501 1041 501 1136.5 454ZM921.5 242.5 921.5 243.5 925 248 928 247.5 935 244 935 243 931 242.5Z"/>
<path fill="#a8911e" stroke="#a8911e" d="M451.5 942 449.5 966.5 471.5 973 475.5 973.5 475.5 972.5 469 963 453.5 943ZM498 497 496 497 495.5 499 495 509 470.5 754 501.5 751 502 741 504 722.5 504 716.5 506 698 506 692 507.5 679.5 507.5 673.5 509.5 655 509.5 649 511 636.5 511 630.5 513 612 513 606 514.5 593.5 514.5 587.5 515 587 521.5 503.5Z"/>
<path fill="#ccb024" stroke="#ccb024" d="M340.5 862.5 332.5 910 332.5 913.5 357.5 928.5 359 928.5 367.5 875 367.5 871 350.5 864.5ZM410 457 408 457.5 371 679 371 681.5 390.5 715.5 391.5 715.5 393 703 395 693 397 676.5 399 666.5 401 650 403 640 403.5 633.5 404.5 630 407.5 607 408.5 603.5 411.5 580.5 412.5 577 415.5 554 428.5 471 428.5 468.5 427.5 467.5Z"/>
<path fill="#ffe42f" stroke="#ffe42f" d="M425 809.5 413.5 808.5 318 855.5 318 857 324 859.5 326.5 859.5 425 811ZM500.5 806 476 806 468 807 351.5 864.5 351.5 866 365.5 871.5 368.5 872 500.5 807ZM219.5 556 218 556 55 636 42 642.5 41.5 644 53.5 648.5 55 648.5 217.5 568.5ZM1187 468.5 1171.5 462 1169.5 462 1052 520 1053.5 525 1054.5 534 1063 530.5 1187 469.5ZM1144.5 456 1137.5 453 1136 453 1039.5 500.5 1039.5 501.5 1044 506 1045 506 1144.5 457Z"/>
<path fill="#9e881c" stroke="#9e881c" d="M521 503.5 501 751 532.5 749 547.5 509Z"/>
<path fill="#564a0f" stroke="#564a0f" d="M710 512 682.5 515 690 750 721.5 749 722 748.5Z"/>
<path fill="#625511" stroke="#625511" d="M683 515 655 517 655.5 518.5 655.5 555.5 656 556 656 592.5 656.5 593 656.5 629.5 657 630 657 667 657.5 667.5 658.5 749.5 690.5 750Z"/>
<path fill="#6f5f14" stroke="#6f5f14" d="M628 517 626.5 749 659 749.5 658 666.5 657.5 666 657.5 629 657 628.5 657 592 656.5 591.5 656.5 555 656 554.5 656 517.5 655.5 517Z"/>
<path fill="#493f0d" stroke="#493f0d" d="M736 507 709.5 512 721.5 748.5 729 748.5 729.5 748 753 746.5Z"/>
<path fill="#877418" stroke="#877418" d="M573.5 513.5 563 748.5 595.5 748.5 595.5 729 596 728.5 596 709 596.5 708.5 596.5 688.5 597 688 597 668.5 597.5 668 601 516 584 514Z"/>
<path fill="#7b6a16" stroke="#7b6a16" d="M600.5 516 597.5 647 597 647.5 597 667 596.5 667.5 596.5 687 596 687.5 596 707.5 595.5 708 595.5 727.5 595 728 595 748.5 627 749 628.5 517Z"/>
<path fill="#3d350b" stroke="#3d350b" d="M762 501 735.5 507 752.5 746.5 756 746.5 759.5 745.5 783 742.5 777.5 675.5 776 664 776 658.5 774 641.5 774 636 772 619 772 613.5 770 596.5 770 591 768.5 579.5 768.5 574 766.5 557 766.5 551.5 764.5 534.5 764.5 529 762.5 512Z"/>
<path fill="#d0b325" stroke="#d0b325" d="M298 405 296.5 405 0 551 0 574.5 20.5 565 290.5 432 291.5 431Z"/>
<path fill="#332c09" stroke="#332c09" d="M786.5 493.5 761.5 501 762 513 764 530 764 535.5 766 552.5 766 558 768 575 768 580.5 769.5 592 769.5 597.5 771.5 614.5 771.5 620 773.5 637 773.5 642.5 775.5 659.5 775.5 665 776 665.5 782.5 742 785.5 742 812 736.5 811.5 726.5 810 717 810 712.5 809 707.5 809 703 807.5 693.5 807.5 689 806 679.5 806 675 804.5 665.5 804.5 661 803.5 656 803.5 651.5 802 642 802 637.5 800.5 628 800.5 623.5 799.5 618.5 799.5 614 798 604.5 798 600 796.5 590.5 796.5 586 795 576.5 795 572 794 567 794 562.5 792.5 553 792.5 548.5 791 539Z"/>
<path fill="#3f360b" stroke="#3f360b" d="M808.5 485 786 493.5 786 497.5 799 615 801.5 643 803 652.5 805.5 680.5 807 690 807 694.5 808.5 704 811.5 736.5 840 728 812.5 508 810 485Z"/>
<path fill="#dbbd27" stroke="#dbbd27" d="M626.5 748.5 625 816 626 816.5 662 817 659 749ZM299 671.5 293.5 665.5 287.5 652 285.5 652 195 696.5 194.5 698.5 209.5 716 210.5 716 299 672.5ZM1029 312 1014.5 294.5 1012.5 294.5 954 323.5 959.5 346 960 346.5 963 346 1029 313.5Z"/>
<path fill="#4a400d" stroke="#4a400d" d="M831 475 810 484.5 809.5 488.5 833.5 678 833.5 682 839.5 727.5 841.5 727.5 866 717 866 714 833 483.5 832.5 476.5 832 475Z"/>
<path fill="#7a6916" stroke="#7a6916" d="M916.5 410 904 424 904 427.5 949 649.5 931.5 668 931.5 669.5 973.5 729 975.5 729.5 995 708.5 995 707 950 650 964 630.5 964 626.5 932 478.5 918 410.5Z"/>
<path fill="#e0c128" stroke="#e0c128" d="M291 431 265.5 443 0 574 0 596 15.5 589 257 470 279 447.5 291 432.5Z"/>
<path fill="#55490f" stroke="#55490f" d="M851.5 464 832 474.5 831.5 477 862.5 693.5 865.5 716.5 867 716.5 890 703.5 890 699.5 873.5 597.5 868 559.5 866.5 553 866.5 550 865 543.5 859.5 505.5 858 499 853 464.5Z"/>
<path fill="#d3b625" stroke="#d3b625" d="M315.5 855 309 890.5 308.5 896.5 329.5 911.5 333 913 341 865.5 341 862.5 326.5 859.5ZM391.5 444 390 444.5 354 643 354 646.5 370.5 681 371.5 681 402.5 494 403.5 491 409 456.5Z"/>
<path fill="#5f5211" stroke="#5f5211" d="M870.5 452 853 463 852 465 853.5 471.5 853.5 474.5 872 589 873 598.5 880.5 643 889.5 703 890.5 703 911.5 688 912 683.5 905.5 648.5 897 596.5 896 593.5 887.5 541.5 886.5 538.5 880.5 501 879.5 498 872 452Z"/>
<path fill="#ffe32f" stroke="#ffe32f" d="M468.5 807 443 808.5 438 810.5 437 809.5 424.5 810 326 858.5 325.5 860 332 861.5 334.5 861 335 862 352 865.5 468.5 808ZM346.5 855 347 854.5 347.5 855 347 855.5ZM347.5 854.5 348 854 348.5 854.5 348 855ZM348.5 854 349 853.5 349.5 854 349 854.5ZM349.5 853.5 350 853 350.5 853.5 350 854ZM350.5 853 351 852.5 351.5 853 351 853.5ZM351.5 852.5 352 852 352.5 852.5 352 853ZM352.5 852 353 851.5 353.5 852 353 852.5ZM353.5 851.5 354 851 354.5 851.5 354 852ZM354.5 851 355 850.5 355.5 851 355 851.5ZM355.5 850.5 356 850 356.5 850.5 356 851ZM356.5 850 357 849.5 357.5 850 357 850.5ZM357.5 849.5 358 849 358.5 849.5 358 850ZM358.5 849 359 848.5 359.5 849 359 849.5ZM359.5 848.5 360 848 360.5 848.5 360 849ZM360.5 848 361 847.5 361.5 848 361 848.5ZM361.5 847.5 362 847 362.5 847.5 362 848ZM362.5 847 363 846.5 363.5 847 363 847.5ZM363.5 846.5 364 846 364.5 846.5 364 847ZM364.5 846 365 845.5 365.5 846 365 846.5ZM377 840 377.5 839.5 378 840 377.5 840.5ZM378 839.5 378.5 839 379 839.5 378.5 840ZM379 839 379.5 838.5 380 839 379.5 839.5ZM380 838.5 380.5 838 381 838.5 380.5 839ZM381 838 381.5 837.5 382 838 381.5 838.5ZM382 837.5 382.5 837 383 837.5 382.5 838ZM383 837 383.5 836.5 384 837 383.5 837.5ZM384 836.5 384.5 836 385 836.5 384.5 837ZM385 836 385.5 835.5 386 836 385.5 836.5ZM386 835.5 386.5 835 387 835.5 386.5 836ZM387 835 387.5 834.5 388 835 387.5 835.5ZM388 834.5 388.5 834 389 834.5 388.5 835ZM389 834 389.5 833.5 390 834 389.5 834.5ZM390 833.5 390.5 833 391 833.5 390.5 834ZM391 833 391.5 832.5 392 833 391.5 833.5ZM392 832.5 392.5 832 393 832.5 392.5 833ZM393 832 393.5 831.5 394 832 393.5 832.5ZM394 831.5 394.5 831 395 831.5 394.5 832ZM395 831 395.5 830.5 396 831 395.5 831.5ZM408.5 824.5 409 824 409.5 824.5 409 825ZM409.5 824 410 823.5 410.5 824 410 824.5ZM410.5 823.5 411 823 411.5 823.5 411 824ZM411.5 823 412 822.5 412.5 823 412 823.5ZM412.5 822.5 413 822 413.5 822.5 413 823ZM413.5 822 414 821.5 414.5 822 414 822.5ZM414.5 821.5 415 821 415.5 821.5 415 822ZM415.5 821 416 820.5 416.5 821 416 821.5ZM416.5 820.5 417 820 417.5 820.5 417 821ZM417.5 820 418 819.5 418.5 820 418 820.5ZM418.5 819.5 419 819 419.5 819.5 419 820ZM419.5 819 420 818.5 420.5 819 420 819.5ZM420.5 818.5 421 818 421.5 818.5 421 819ZM421.5 818 422 817.5 422.5 818 422 818.5ZM422.5 817.5 423 817 423.5 817.5 423 818ZM423.5 817 424 816.5 424.5 817 424 817.5ZM424.5 816.5 425 816 425.5 816.5 425 817ZM425.5 816 426 815.5 426.5 816 426 816.5ZM426.5 815.5 427 815 427.5 815.5 427 816ZM243.5 594 238 589 237.5 586.5 236 586.5 116 645.5 116 646.5 127.5 650 131.5 650.5 243.5 595.5ZM1170 462 1157 458.5 1153.5 458.5 1152 459.5 1151.5 457.5 1144 456 1044.5 505 1044.5 507 1047.5 510.5 1051.5 520.5 1053 520.5 1170 463ZM1057 505.5 1057.5 505 1058 505.5 1057.5 506ZM1058 505 1058.5 504.5 1059 505 1058.5 505.5ZM1059 504.5 1059.5 504 1060 504.5 1059.5 505ZM1060 504 1060.5 503.5 1061 504 1060.5 504.5ZM1061 503.5 1061.5 503 1062 503.5 1061.5 504ZM1062 503 1062.5 502.5 1063 503 1062.5 503.5ZM1063 502.5 1063.5 502 1064 502.5 1063.5 503ZM1064 502 1064.5 501.5 1065 502 1064.5 502.5ZM1065 501.5 1065.5 501 1066 501.5 1065.5 502ZM1066 501 1066.5 500.5 1067 501 1066.5 501.5ZM1067 500.5 1067.5 500 1068 500.5 1067.5 501ZM1068 500 1068.5 499.5 1069 500 1068.5 500.5ZM1069 499.5 1069.5 499 1070 499.5 1069.5 500ZM1070 499 1070.5 498.5 1071 499 1070.5 499.5ZM1071 498.5 1071.5 498 1072 498.5 1071.5 499ZM1072 498 1072.5 497.5 1073 498 1072.5 498.5ZM1073 497.5 1073.5 497 1074 497.5 1073.5 498ZM1074 497 1074.5 496.5 1075 497 1074.5 497.5ZM1075 496.5 1075.5 496 1076 496.5 1075.5 497ZM1087.5 490.5 1088 490 1088.5 490.5 1088 491ZM1088.5 490 1089 489.5 1089.5 490 1089 490.5ZM1089.5 489.5 1090 489 1090.5 489.5 1090 490ZM1090.5 489 1091 488.5 1091.5 489 1091 489.5ZM1091.5 488.5 1092 488 1092.5 488.5 1092 489ZM1092.5 488 1093 487.5 1093.5 488 1093 488.5ZM1093.5 487.5 1094 487 1094.5 487.5 1094 488ZM1094.5 487 1095 486.5 1095.5 487 1095 487.5ZM1095.5 486.5 1096 486 1096.5 486.5 1096 487ZM1096.5 486 1097 485.5 1097.5 486 1097 486.5ZM1097.5 485.5 1098 485 1098.5 485.5 1098 486ZM1098.5 485 1099 484.5 1099.5 485 1099 485.5ZM1099.5 484.5 1100 484 1100.5 484.5 1100 485ZM1100.5 484 1101 483.5 1101.5 484 1101 484.5ZM1101.5 483.5 1102 483 1102.5 483.5 1102 484ZM1102.5 483 1103 482.5 1103.5 483 1103 483.5ZM1103.5 482.5 1104 482 1104.5 482.5 1104 483ZM1104.5 482 1105 481.5 1105.5 482 1105 482.5ZM1105.5 481.5 1106 481 1106.5 481.5 1106 482ZM1118 475.5 1118.5 475 1119 475.5 1118.5 476ZM1119 475 1119.5 474.5 1120 475 1119.5 475.5ZM1120 474.5 1120.5 474 1121 474.5 1120.5 475ZM1121 474 1121.5 473.5 1122 474 1121.5 474.5ZM1122 473.5 1122.5 473 1123 473.5 1122.5 474ZM1123 473 1123.5 472.5 1124 473 1123.5 473.5ZM1124 472.5 1124.5 472 1125 472.5 1124.5 473ZM1125 472 1125.5 471.5 1126 472 1125.5 472.5ZM1126 471.5 1126.5 471 1127 471.5 1126.5 472ZM1127 471 1127.5 470.5 1128 471 1127.5 471.5ZM1128 470.5 1128.5 470 1129 470.5 1128.5 471ZM1129 470 1129.5 469.5 1130 470 1129.5 470.5ZM1130 469.5 1130.5 469 1131 469.5 1130.5 470ZM1131 469 1131.5 468.5 1132 469 1131.5 469.5ZM1132 468.5 1132.5 468 1133 468.5 1132.5 469ZM1133 468 1133.5 467.5 1134 468 1133.5 468.5ZM1134 467.5 1134.5 467 1135 467.5 1134.5 468ZM1135 467 1135.5 466.5 1136 467 1135.5 467.5ZM1136 466.5 1136.5 466 1137 466.5 1136.5 467ZM1149.5 460 1150 459.5 1150.5 460 1150 460.5ZM1150.5 459.5 1151 459 1151.5 459.5 1151 460ZM925.5 249 930.5 257 931.5 257 950 248 950 247 938.5 243.5 934.5 243 926 247Z"/>
<path fill="#edcd2a" stroke="#edcd2a" d="M256.5 469.5 0 595.5 0 615.5 2 615.5 240 498.5 254.5 473 256.5 470.5Z"/>
<path fill="#695b13" stroke="#695b13" d="M888 438.5 871 451.5 872.5 458.5 881 510.5 882 513.5 888 551 889 554 897.5 606 898.5 609 907 661 908 664 911.5 687 912.5 687 932 669 932 667 899.5 496 889 438.5Z"/>
<path fill="#d9bc26" stroke="#d9bc26" d="M294 840 287 875.5 287 878 306 894.5 309 896 315.5 861 316 855 308 850.5 301 845.5 295 840ZM375.5 430.5 374 430.5 338 614.5 338 616.5 353.5 645.5 354.5 645.5 391 445 391 444Z"/>
<path fill="#b0981f" stroke="#b0981f" d="M311 694 309.5 693.5 224 735.5 224 737 236.5 757.5 238.5 758 322 717 321.5 714 312 698.5ZM1044.5 333.5 1042.5 333 967 370 966.5 373 972.5 396.5 989 389 1057 355.5 1056 352.5Z"/>
<path fill="#ffdf2e" stroke="#ffdf2e" d="M415 738 413.5 738 354.5 773.5 354 775 355.5 777 380.5 798 383 798.5 415 739ZM262.5 618.5 253 605.5 251 605.5 146.5 657 146.5 658 162 668.5 163 668.5 262.5 619.5ZM222.5 579 219.5 576 217.5 576 91 638 67 650 67 651 79 651 222.5 580.5ZM982 264.5 967.5 255 965 254.5 937.5 268 937 269.5 941.5 278.5 943 284 944.5 284 982 265.5Z"/>
<path fill="#726214" stroke="#726214" d="M903.5 424.5 888.5 438 888.5 440.5 920 606.5 931 667.5 931.5 668.5 932.5 668.5 949.5 650.5 949.5 648.5 945 628.5 904.5 424.5Z"/>
<path fill="#dec027" stroke="#dec027" d="M275.5 821 268 858.5 286.5 877.5 287.5 877.5 294.5 843 294.5 840 283 828.5 277 821ZM361 416 360 416 345 489.5 344 492 342.5 501.5 341.5 504 340 513.5 339 516 337.5 525.5 336.5 528 335 537.5 323.5 590.5 323.5 592.5 337.5 616 338.5 616 345.5 582 345.5 579.5 350 559 350 556.5 354 538.5 354 536 358.5 515.5 358.5 513 363 492.5 363 490 367 472 367 469.5 375 430Z"/>
<path fill="#7e6d16" stroke="#7e6d16" d="M889.5 702.5 865.5 716 865.5 717 897 787.5 898 787.5 925.5 772 925.5 770 890.5 702.5ZM993.5 568 986 588.5 1037 631 1039 631.5 1047.5 608 996 569Z"/>
<path fill="#e2c428" stroke="#e2c428" d="M260.5 799 252 838.5 267 857.5 268.5 858 269.5 855.5 276.5 820.5 270 812.5 261.5 799ZM349 400.5 348 400.5 340 438.5 325 504.5 324.5 509 315 550 314.5 554.5 310.5 570.5 311 573.5 323 592 324 592 325.5 586.5 327 577 328 574.5 329.5 565 330.5 562.5 332 553 333 550.5 334.5 541 335.5 538.5 337 529 338 526.5 339.5 517 340.5 514.5 342 505 343 502.5 347.5 478.5 348.5 476 350 466.5 360.5 418 360.5 415Z"/>
<path fill="#eccb2a" stroke="#eccb2a" d="M287 651.5 276.5 639 275 635 273 634.5 178.5 681 178.5 682 194 697.5 195.5 697.5 287 652.5ZM1014 294 998.5 278.5 996.5 278.5 948.5 302 954 324 1014 295Z"/>
<path fill="#817017" stroke="#817017" d="M928 394.5 917.5 408.5 917 411 954 585 955 587.5 959 608.5 960 611 963.5 629.5 964.5 629.5 976 611 976.5 606.5 962.5 546 957.5 521.5 956 517 951 492.5 949.5 488 943.5 459 942 454.5 937 430 935.5 425.5 929 394.5Z"/>
<path fill="#ffe32e" stroke="#ffe32e" d="M252.5 605 244 594.5 243 594.5 131 649.5 131 651 147 658 252.5 606ZM218 568 216 568 54.5 647.5 54.5 648.5 67.5 651 219 576.5 218.5 575 219 572.5ZM966 254 951 247 949.5 247 931 256 931 258 933.5 261.5 936.5 268.5 938 269 965.5 255.5Z"/>
<path fill="#e5c629" stroke="#e5c629" d="M248 777.5 239.5 813 239 817.5 251 837 253 837.5 254.5 828.5 261 801 261 798.5 249 777.5ZM339 385 338 385 325 443.5 313 493.5 312 500 301.5 543.5 300.5 550 299 554.5 299.5 557 310 572 311 572 312 569 325.5 505.5 329.5 489.5 330 485 345 419 345.5 414.5 348.5 403 348.5 400Z"/>
<path fill="#f9d72c" stroke="#f9d72c" d="M274.5 634 263.5 619.5 261 619 162.5 667.5 162.5 668.5 178 681.5 180 681.5 274.5 635ZM998 278 982.5 265 980.5 265 943 283.5 946 292.5 948.5 302.5 950.5 302.5 998 279Z"/>
<path fill="#786815" stroke="#786815" d="M911.5 686.5 890 702 890 704 925 771.5 926 771.5 951 753.5 951 752 912.5 686.5ZM986 588 976.5 607.5 976.5 609.5 1025.5 657.5 1026.5 657.5 1026 655.5 987 588Z"/>
<path fill="#ffe22e" stroke="#ffe22e" d="M441.5 809 436.5 809.5 332.5 860.5 332.5 861.5 336.5 861.5 441.5 810ZM222.5 540.5 206 548 28.5 635.5 28 637 40.5 643.5 42.5 643.5 219.5 556.5 222.5 543ZM1154.5 458 1151 458 1047.5 509 1047 510.5 1049 511 1154 459.5Z"/>
<path fill="#887518" stroke="#887518" d="M936.5 379 928.5 393 928 395 943 460 949 489 950.5 493.5 955.5 518 957 522.5 962 547 963.5 551.5 968.5 576 970 580.5 976 609 977 609 986 590.5 986.5 586.5 953.5 447 952 438.5 950 432 950 430 948 423.5 944.5 406.5 942.5 400 938 379Z"/>
<path fill="#e7c829" stroke="#e7c829" d="M237.5 758.5 230 789 229 796 238.5 816.5 239.5 816.5 247.5 783.5 248.5 776.5 238.5 758.5ZM331.5 368.5 330.5 368.5 322 406 289.5 540 290 544.5 298.5 555.5 300 555 302 544.5 339 385.5Z"/>
<path fill="#e2c328" stroke="#e2c328" d="M354.5 645 353 645.5 311.5 697.5 311.5 699.5 323 719 330.5 737 332.5 736 371.5 681.5 371 679Z"/>
<path fill="#fffa33" stroke="#fffa33" d="M501.5 750.5 473.5 753 470 754 444.5 807.5 444.5 809 479 806.5ZM275.5 490.5 241.5 494.5 237.5 501.5 232 514 231.5 516.5 233 516.5 272.5 494.5 275.5 492.5ZM280.5 472.5 280 472 272.5 472 264 471 255 471 244 489.5 242.5 493.5 244 493.5 279 478Z"/>
<path fill="#ab941e" stroke="#ab941e" d="M753 746 721.5 748 732.5 822 768.5 819.5 768 814.5Z"/>
<path fill="#a48d1d" stroke="#a48d1d" d="M783.5 742 779 742 752.5 746 768 819.5 803 814 803 811.5Z"/>
<path fill="#8a7718" stroke="#8a7718" d="M840 727.5 838 727.5 812 735.5 812 738 835 810 837 810 843.5 807.5 867.5 800.5 865.5 793.5Z"/>
<path fill="#8d7a19" stroke="#8d7a19" d="M943.5 362 937.5 376.5 937 379.5 969.5 516.5 976.5 548.5 978.5 555 986 588 987 588 994 569.5 994 566.5 947 374 947 372 944.5 362Z"/>
<path fill="#847217" stroke="#847217" d="M864.5 716.5 839.5 727 839.5 728.5 866.5 799.5 868.5 800 897.5 787.5 897.5 786 866.5 716.5Z"/>
<path fill="#e8c929" stroke="#e8c929" d="M230 744.5 228.5 745 222 771.5 222 774 228.5 795 229.5 795 238 760.5 238 757.5ZM326.5 352.5 325 353 281 532 281 535 289 543 290 543 292.5 530.5 295.5 520 300.5 497 331.5 369Z"/>
<path fill="#ffee31" stroke="#ffee31" d="M441.5 750.5 440.5 750.5 383 797.5 383 799 402.5 807 414.5 808.5 441.5 752ZM532.5 748.5 531.5 748.5 478.5 805.5 478.5 806.5 515.5 807Z"/>
<path fill="#766615" stroke="#766615" d="M963.5 629 949 649 949 650.5 994 707.5 995.5 707.5 1011.5 686 1012 683.5 964.5 629Z"/>
<path fill="#fffd34" stroke="#fffd34" d="M471 753.5 470 753.5 415 808 415 809 424.5 810.5 438.5 810 445 809ZM323.5 592 322 592 262.5 616 261 617 261 618.5 273.5 634 275.5 639 277 639 323.5 593Z"/>
<path fill="#e8c829" stroke="#e8c829" d="M222 734 218 751.5 220 760.5 221.5 772 223 772 229.5 743.5 223.5 734ZM323.5 335 322.5 335 273.5 529.5 274 531 280.5 534.5 281.5 534.5 282 530.5 326 353.5 326 350Z"/>
<path fill="#8b7819" stroke="#8b7819" d="M931.5 669 950.5 753 951.5 753 975 730 975 729 933.5 670ZM1001 505 1002 517 1003 518 1055.5 540.5 1055.5 539.5 1002.5 505Z"/>
<path fill="#fff432" stroke="#fff432" d="M532 748.5 504.5 750 500.5 751 478.5 806 479.5 806 529 753 532 749.5ZM268.5 528 264 530 219 558 218 560 218 563.5 217 567.5 218 573 219.5 573 268.5 529ZM275.5 492 272.5 493 231.5 516 230.5 517 230.5 518.5 272 506.5Z"/>
<path fill="#ffff35" stroke="#ffff35" d="M300 555.5 298.5 555.5 248 599 248 601 260.5 617.5 261.5 617.5 311 572.5 310.5 570.5Z"/>
<path fill="#95811a" stroke="#95811a" d="M949.5 329.5 948 346.5 998.5 549.5 999.5 549.5 1002 535 1002 530.5 951 329.5Z"/>
<path fill="#fff232" stroke="#fff232" d="M338.5 615.5 276 639 276 640 287 653 293 666 295 665 338.5 616.5ZM271.5 506.5 270 506.5 223.5 538 223 540 225.5 539.5 268 520 269 518.5Z"/>
<path fill="#a68f1d" stroke="#a68f1d" d="M722 749 721 749 697.5 820 733 822 730 799Z"/>
<path fill="#ddbf27" stroke="#ddbf27" d="M372 681 370 681.5 330.5 736.5 330.5 737.5 391 716 391 714.5Z"/>
<path fill="#b9a021" stroke="#b9a021" d="M690.5 750 689.5 750 661.5 817 698 820Z"/>
<path fill="#7f6e16" stroke="#7f6e16" d="M812.5 736 811.5 736 803 814 835.5 810Z"/>
<path fill="#dcbe27" stroke="#dcbe27" d="M627 749 626 749 589 810.5 588.5 812.5 620.5 816 625.5 816Z"/>
<path fill="#f0cf2a" stroke="#f0cf2a" d="M595 749 593 750 553.5 805.5 552 809 589 812.5Z"/>
<path fill="#fff332" stroke="#fff332" d="M470.5 753.5 441.5 750 416 803 414 808.5 415.5 809 470.5 754.5ZM287.5 445.5 277 448 256.5 469 256.5 470 283.5 461.5Z"/>
<path fill="#ffe02e" stroke="#ffe02e" d="M563.5 748.5 562.5 748.5 518 802 515 806 515 807 546 808.5 546.5 809 552 809 552.5 808.5Z"/>
<path fill="#ffde2d" stroke="#ffde2d" d="M354 645 293 665.5 293 666.5 299 673 310 693.5 311 698 312.5 698 353.5 647Z"/>
<path fill="#bea422" stroke="#bea422" d="M722 748 690 749.5 697.5 819.5 698.5 819.5 722 749.5Z"/>
<path fill="#9a851b" stroke="#9a851b" d="M812 736 809.5 736 802 738 782.5 741.5 802.5 814 803.5 814 805 797.5 812 740.5Z"/>
<path fill="#e7c729" stroke="#e7c729" d="M217.5 727 218 750 219 750 223 733.5 218.5 727ZM323 318.5 322 318.5 304 390 303 392 298.5 411.5 297.5 413.5 293 433 292 435 287.5 454.5 286.5 456.5 282 476 281 478 276 499.5 268.5 527 269 528.5 273 530.5 274.5 530 323 337Z"/>
<path fill="#ceb124" stroke="#ceb124" d="M690.5 749.5 658.5 749 661.5 816.5 662.5 816.5 689 754.5Z"/>
<path fill="#ffdc2d" stroke="#ffdc2d" d="M339 616 337.5 616 294.5 663.5 293.5 666 296.5 665.5 298 664.5 354 645.5 354 644Z"/>
<path fill="#837117" stroke="#837117" d="M976.5 609 977.5 612.5 1011.5 684.5 1012.5 684.5 1027 659 1027 657.5 977.5 609Z"/>
<path fill="#edcc2a" stroke="#edcc2a" d="M627 748.5 594.5 748 588.5 812 589.5 812 626.5 750.5Z"/>
<path fill="#ffe72f" stroke="#ffe72f" d="M442 750 419.5 739.5 414.5 738 382.5 797 382.5 798.5 383.5 798.5 442 751Z"/>
<path fill="#736414" stroke="#736414" d="M931 668.5 912 686 912 688 950 752.5 951 752.5 950.5 748 947.5 737 932 668.5Z"/>
<path fill="#fdda2d" stroke="#fdda2d" d="M595 748 563 748 551.5 809 553 808.5 595 749.5Z"/>
<path fill="#897618" stroke="#897618" d="M986.5 588.5 987 590.5 1026 658 1027.5 658 1037.5 635 1038.5 630.5 988.5 589Z"/>
<path fill="#fff031" stroke="#fff031" d="M324.5 592 323 592 276 638.5 276 639.5 280 638.5 338 616.5 337.5 613.5Z"/>
<path fill="#ffe82f" stroke="#ffe82f" d="M563.5 748 539 748 531.5 749 515 806.5 516.5 806 563.5 749Z"/>
<path fill="#98831b" stroke="#98831b" d="M949.5 312.5 950 330 1001 531 1002.5 531 1003 517 986 450.5 985 448.5 981 431 980 429 976 411.5 975 409.5 971.5 394 970.5 392 966.5 374.5 965.5 372.5 962 357 961 355 957 337.5 956 335.5 952.5 320 951.5 318 950.5 312.5Z"/>
<path fill="#706114" stroke="#706114" d="M976 608.5 965 626.5 964 630 1011 684 1012 684 977 608.5Z"/>
<path fill="#fffc34" stroke="#fffc34" d="M324 591.5 311.5 572 310 572 261 616.5 261 617.5 324 592.5Z"/>
<path fill="#877518" stroke="#877518" d="M999 549.5 999 550.5 1046.5 608.5 1047.5 608.5 1053 586 1053 583.5 1005 552.5Z"/>
<path fill="#917d1a" stroke="#917d1a" d="M995.5 484 1000.5 505 1050 523 1053.5 523.5 1053 521 1048.5 511 997 484Z"/>
<path fill="#8c7819" stroke="#8c7819" d="M1002.5 532.5 1002.5 533.5 1052.5 584 1053.5 584 1056 560.5 1006.5 534Z"/>
<path fill="#7a6915" stroke="#7a6915" d="M998.5 549.5 993.5 568.5 1046 608.5 1047 608.5 1045.5 605.5 1002 552 999.5 549.5Z"/>
<path fill="#ffff34" stroke="#ffff34" d="M299.5 555 290 542.5 288 543 238 588.5 238 589.5 240 589 299 556.5Z"/>
<path fill="#e4c528" stroke="#e4c528" d="M324.5 302.5 323.5 302.5 268 518 268.5 527.5 269.5 527.5 281.5 479 282.5 477 287 457.5 288 455.5 292.5 436 293.5 434 298 414.5 299 412.5 303.5 393 304.5 391 309.5 369.5 310.5 367.5 315 348 323 318.5Z"/>
<path fill="#8f7c19" stroke="#8f7c19" d="M1002.5 517 1002.5 518 1052.5 559 1055 561 1056 561 1056 540 1006 518Z"/>
<path fill="#ffef31" stroke="#ffef31" d="M272 531.5 271 531.5 218.5 572.5 218 576 222.5 580.5 224 580.5 272 532.5ZM268.5 519 265.5 520.5 218.5 558 218.5 559 223 557 269 528.5Z"/>
<path fill="#806f17" stroke="#806f17" d="M1001.5 532 999 550 1048 581.5 1053 584 1053 583 1002.5 532Z"/>
<path fill="#fffe34" stroke="#fffe34" d="M298.5 556 293.5 558 237.5 589 237.5 590 247.5 600 248.5 600 297.5 558Z"/>
<path fill="#fcda2d" stroke="#fcda2d" d="M230 582 224.5 581 90.5 647 90.5 648 100 646.5 106.5 644 229.5 583.5Z"/>
<path fill="#fff733" stroke="#fff733" d="M289.5 542.5 288.5 542.5 288 543.5 287 543.5 229.5 581.5 229.5 583 236 586.5 237.5 589.5 238.5 589.5 284.5 548 288.5 543.5 289.5 543.5ZM291 432 290 432 278.5 446 277.5 448.5 279.5 448.5 287.5 446Z"/>
<path fill="#fffb33" stroke="#fffb33" d="M289.5 542 281.5 534 280 534 230 581 230 582 233.5 580.5 288.5 544Z"/>
<path fill="#937f1a" stroke="#937f1a" d="M1001 504.5 1001 505.5 1054 540 1056 540.5 1056 537 1053.5 523Z"/>
<path fill="#867418" stroke="#867418" d="M1002.5 517.5 1002 518.5 1002 530 1001.5 530.5 1002 533 1049 558 1055 560.5 1054 558.5 1004 517.5Z"/>
<path fill="#fff532" stroke="#fff532" d="M279 477.5 277 477.5 246.5 491.5 242 493 241 495.5 276 491ZM283.5 461 281.5 461 257 469 255 470.5 255 471.5 263 471.5 263.5 472 280.5 473Z"/>
<path fill="#6c5d13" stroke="#6c5d13" d="M985 443.5 987 452.5 988.5 454.5 1026 481 1027 481 1026.5 478.5 1010 454 1008 452Z"/>
<path fill="#5a4e10" stroke="#5a4e10" d="M973.5 399 982 433 1007 452.5 1008 452.5 1007.5 450 987 416.5 975 399.5Z"/>
<path fill="#fff933" stroke="#fff933" d="M271.5 506 230 518 226.5 527.5 223.5 538.5 225 538.5 271.5 507Z"/>
<path fill="#fff732" stroke="#fff732" d="M267.5 519.5 266 519.5 222.5 539.5 219 554 219 558 221.5 557 267.5 520.5Z"/>
<path fill="#796815" stroke="#796815" d="M991 466.5 991.5 470 1036 499 1039.5 500.5 1037.5 495 1029.5 483 1027 480.5 993 466.5Z"/>
<path fill="#99841b" stroke="#99841b" d="M1002 516.5 1002 517.5 1003 517.5 1003 516.5ZM947 297 951 319 956.5 338.5 1001.5 515.5 1002.5 515.5 1001.5 504.5 999 494.5 998 492.5 994.5 477 993.5 475 990.5 461.5 989.5 459.5 986.5 446 985.5 444 982.5 430.5 981.5 428.5 978.5 415 977.5 413 974.5 399.5 961.5 351 950 304.5 949 302.5 948 297ZM946.5 295 946.5 296 947.5 296 947.5 295Z"/>
<path fill="#fff131" stroke="#fff131" d="M281 533.5 274.5 530 273 530 224.5 578.5 224.5 579.5 225.5 579.5 281 534.5Z"/>
<path fill="#7f6d16" stroke="#7f6d16" d="M992 470 995 483.5 1039.5 501 1038.5 499 994 470.5Z"/>
<path fill="#706014" stroke="#706014" d="M987.5 453 991 467 1027.5 481.5 1027.5 480.5 991.5 455Z"/>
<path fill="#ffeb30" stroke="#ffeb30" d="M278.5 536 277.5 536 224 579 223 581 230 582.5 278.5 537Z"/>
<path fill="#827017" stroke="#827017" d="M995.5 483 995.5 484.5 1041 508.5 1048 511.5 1048 510 1045 505.5 1040 500.5 997 483Z"/>
<path fill="#ffea30" stroke="#ffea30" d="M273.5 529.5 269.5 527.5 267 528.5 219 572 219 573 220 573 273.5 531Z"/>
<path fill="#5b4e10" stroke="#5b4e10" d="M982.5 433 984.5 443 985.5 444.5 1007.5 452.5 1007.5 451.5 984 433Z"/></g>
<line x1="154.9" y1="360.4" x2="0.2" y2="240.1" stroke="#000" stroke-width="2"/>
<line x1="897.7" y1="937.9" x2="1125.2" y2="1114.8" stroke="#000" stroke-width="2" stroke-dasharray="3.80 3.80"/>
<line x1="308.9" y1="896.1" x2="0.3" y2="1047.8" stroke="#000" stroke-width="2"/>
<line x1="1181.8" y1="466.6" x2="1809.9" y2="157.7" stroke="#000" stroke-width="2" stroke-dasharray="3.34 3.34"/>
<line x1="636.6" y1="323.3" x2="636.6" y2="0.2" stroke="#000" stroke-width="2"/>
<line x1="636.6" y1="1066.1" x2="636.6" y2="1114.6" stroke="#000" stroke-width="2" stroke-dasharray="3.00 3.00"/>
<line x1="181.0" y1="1002.6" x2="142.5" y2="972.6" stroke="#ff0000" stroke-width="2"/>
<line x1="181.0" y1="1002.6" x2="132.6" y2="1026.4" stroke="#00ff00" stroke-width="2"/>
<line x1="181.0" y1="1002.6" x2="181.0" y2="954.0" stroke="#0000ff" stroke-width="2"/>
<path d="M128.8 972.7L140.8 960.7M128.8 960.7L140.8 972.7" stroke="#000" stroke-width="2" fill="none"/>
<path d="M116.9 1037.2L128.9 1025.2M116.9 1025.2L122.9 1031.2" stroke="#000" stroke-width="2" fill="none"/>
<path d="M175.0 950.2L187.0 950.2M175.0 938.2L187.0 938.2M175.0 950.2L187.0 938.2" stroke="#000" stroke-width="2" fill="none"/></svg>
</div>
<div class="a" style="left:1070px;top:1161px;width:1810px;height:86px;background:linear-gradient(#efefef,#c4c4c4)"></div>
<div class="a" style="left:1070px;top:1246px;width:1810px;height:4px;background:#a8a8a8;border-bottom:2px solid #333"></div>
<svg class="a" style="left:0;top:0" width="2880" height="1260"><defs><linearGradient id="sel" x1="0" y1="0" x2="0" y2="1"><stop offset="0" stop-color="#d6d6d6"/><stop offset="1" stop-color="#acacac"/></linearGradient></defs><path d="M2328 1245.5 V1169 Q2328 1162.2 2335 1162.2 H2405 Q2412 1162.2 2412 1169 V1245.5 Z" fill="url(#sel)"/><path d="M2440 1245.5 V1169 Q2440 1162.2 2447 1162.2 H2517 Q2524 1162.2 2524 1169 V1245.5 Z" fill="url(#sel)"/><path d="M1122 1228 L1133.6 1216.3 V1192.5 L1113.9 1181.4 L1094.1 1192.5 V1216.3 L1101 1221 M1094.1 1192.5 L1113.9 1203.7 L1133.6 1192.5 M1113.9 1203.7 V1214" fill="none" stroke="#ffffff" stroke-width="2" stroke-dasharray="4 3"/><path d="M1103.8 1216.3 h5 l6.5 7.8 l-6.5 7.9 h-5 l6.5 -7.9 Z M1113 1216.3 h5 l6.5 7.8 l-6.5 7.9 h-5 l6.5 -7.9 Z" fill="#ffffff"/><path d="M1198.3 1221.5 L1186.4 1215.6 V1192.5 L1206.2 1181.4 L1225.8 1192.5 V1215.6 L1213.9 1221.5 M1186.4 1192.5 L1206.2 1204.4 L1225.8 1192.5 M1206.2 1204.4 V1208" fill="none" stroke="#ffffff" stroke-width="2"/><path d="M1198.3 1209.5 H1213.9 M1198.3 1230 H1213.9 M1200 1210 L1212 1229.5 M1212 1210 L1200 1229.5" stroke="#ffffff" stroke-width="1.8" fill="none"/><line x1="1261" y1="1165" x2="1261" y2="1244" stroke="#3a3a3a" stroke-width="2" stroke-dasharray="2 4"/><circle cx="1312.5" cy="1198.5" r="15" fill="none" stroke="#ffffff" stroke-width="2.2"/><path d="M1320.5 1212 L1329 1227" stroke="#ffffff" stroke-width="7" stroke-linecap="round"/><path d="M1292 1187 V1178 H1301 M1324 1178 H1333 V1187 M1292 1210 V1219 H1301 M1333 1210 V1219" fill="none" stroke="#ffffff" stroke-width="2.2"/><circle cx="1404.3" cy="1198.5" r="15" fill="none" stroke="#ffffff" stroke-width="2.2"/><path d="M1412 1212 L1420.5 1227" stroke="#ffffff" stroke-width="7" stroke-linecap="round"/><path d="M1395 1198.5 H1413.6 M1404.3 1189.5 V1208" stroke="#ffffff" stroke-width="2"/><circle cx="1496.4" cy="1198.5" r="15" fill="none" stroke="#ffffff" stroke-width="2.2"/><path d="M1504.2 1212 L1512.7 1227" stroke="#ffffff" stroke-width="7" stroke-linecap="round"/><path d="M1486.8 1198.5 H1506" stroke="#ffffff" stroke-width="2"/><path d="M1575.3 1212.6 A 20.5 20.5 0 1 0 1580 1192" fill="none" stroke="#ffffff" stroke-width="2.2"/><path d="M1574.5 1196 L1576 1186 L1584 1193 Z" fill="#ffffff"/><line x1="1649" y1="1165" x2="1649" y2="1244" stroke="#3a3a3a" stroke-width="2" stroke-dasharray="2 4"/><path d="M1701.3 1185 V1217 M1685.3 1198 L1717.8 1204.4 M1693.3 1208 L1709.3 1194.5" stroke="#ffffff" stroke-width="2" fill="none"/><path d="M1710.8 1200.3 Q1723.3 1189.3 1735.8 1200.3 Q1723.3 1210.3 1710.8 1200.3 Z" fill="#ffffff"/><circle cx="1723.3" cy="1200.3" r="4.2" fill="#d6d6d6" stroke="#ffffff" stroke-width="0"/><text x="1713.6" y="1232" font-family="Liberation Sans" font-size="25" fill="#ffffff" textLength="21" lengthAdjust="spacingAndGlyphs">+X</text><path d="M1793.5 1185 V1217 M1777.5 1198 L1810.0 1204.4 M1785.5 1208 L1801.5 1194.5" stroke="#ffffff" stroke-width="2" fill="none"/><path d="M1766.1 1192.8 Q1778.6 1181.8 1791.1 1192.8 Q1778.6 1202.8 1766.1 1192.8 Z" fill="#ffffff"/><circle cx="1778.6" cy="1192.8" r="4.2" fill="#d6d6d6" stroke="#ffffff" stroke-width="0"/><text x="1806.9" y="1232" font-family="Liberation Sans" font-size="25" fill="#ffffff" textLength="21" lengthAdjust="spacingAndGlyphs">-X</text><path d="M1885.4 1185 V1217 M1869.4 1198 L1901.9 1204.4 M1877.4 1208 L1893.4 1194.5" stroke="#ffffff" stroke-width="2" fill="none"/><path d="M1888.5 1188 Q1901 1177 1913.5 1188 Q1901 1198 1888.5 1188 Z" fill="#ffffff"/><circle cx="1901" cy="1188" r="4.2" fill="#d6d6d6" stroke="#ffffff" stroke-width="0"/><text x="1898.4" y="1232" font-family="Liberation Sans" font-size="25" fill="#ffffff" textLength="21" lengthAdjust="spacingAndGlyphs">+Y</text><path d="M1977.5 1185 V1217 M1961.5 1198 L1994.0 1204.4 M1969.5 1208 L1985.5 1194.5" stroke="#ffffff" stroke-width="2" fill="none"/><path d="M1949.5 1213.8 Q1962 1202.8 1974.5 1213.8 Q1962 1223.8 1949.5 1213.8 Z" fill="#ffffff"/><circle cx="1962" cy="1213.8" r="4.2" fill="#d6d6d6" stroke="#ffffff" stroke-width="0"/><text x="1990.6" y="1232" font-family="Liberation Sans" font-size="25" fill="#ffffff" textLength="21" lengthAdjust="spacingAndGlyphs">-Y</text><path d="M2069.4 1184.3 V1217 M2053.4 1198 L2085.9 1204.4 M2061.4 1208 L2077.4 1194.5" stroke="#ffffff" stroke-width="2" fill="none"/><path d="M2056.9 1178.4 Q2069.4 1167.4 2081.9 1178.4 Q2069.4 1188.4 2056.9 1178.4 Z" fill="#ffffff"/><circle cx="2069.4" cy="1178.4" r="4.2" fill="#d6d6d6" stroke="#ffffff" stroke-width="0"/><text x="2081.3" y="1232" font-family="Liberation Sans" font-size="25" fill="#ffffff" textLength="21" lengthAdjust="spacingAndGlyphs">+Z</text><path d="M2161.7 1185.3 V1218 M2145.7 1198 L2178.2 1204.4 M2153.7 1208 L2169.7 1194.5" stroke="#ffffff" stroke-width="2" fill="none"/><path d="M2149.2 1223.7 Q2161.7 1212.7 2174.2 1223.7 Q2161.7 1233.7 2149.2 1223.7 Z" fill="#ffffff"/><circle cx="2161.7" cy="1223.7" r="4.2" fill="#d6d6d6" stroke="#ffffff" stroke-width="0"/><text x="2174.3" y="1232" font-family="Liberation Sans" font-size="25" fill="#ffffff" textLength="21" lengthAdjust="spacingAndGlyphs">-Z</text><line x1="2221" y1="1165" x2="2221" y2="1244" stroke="#3a3a3a" stroke-width="2" stroke-dasharray="2 4"/><path d="M2253.8 1201.2 H2281.1 V1228.2 H2253.8 Z M2253.8 1201.2 L2300 1179.6 H2302 V1182.8 L2281.1 1228.2 M2281.1 1201.2 L2302 1179.6" fill="none" stroke="#ffffff" stroke-width="2.2" stroke-linejoin="round"/><path d="M2348.6 1193.4 H2380.1 V1225.2 H2348.6 Z M2359.8 1182.6 H2391.2 V1213.3 H2359.8 Z M2348.6 1193.4 L2359.8 1182.6 M2380.1 1193.4 L2391.2 1182.6 M2348.6 1225.2 L2359.8 1213.3 M2380.1 1225.2 L2391.2 1213.3" fill="none" stroke="#ffffff" stroke-width="2.2"/><line x1="2425" y1="1165" x2="2425" y2="1244" stroke="#3a3a3a" stroke-width="2" stroke-dasharray="2 4"/><path d="M2481.8 1180.8 V1198.7 M2486.3 1203.9 H2504.9" stroke="#ffffff" stroke-width="2" fill="none"/><circle cx="2481.8" cy="1203.9" r="2.8" fill="#ffffff"/><path d="M2478.8 1206.9 L2465.5 1220.3" stroke="#ffffff" stroke-width="2" stroke-dasharray="2 1.5"/><path d="M2573.8 1180.8 V1198.7 M2573.8 1182.3 H2578.5 M2573.8 1187.5 H2578.5 M2573.8 1193.5 H2578.5 M2578.5 1203.9 H2597 M2583.7 1199.4 V1203.9 M2589 1199.4 V1203.9 M2594.9 1199.4 V1203.9" stroke="#ffffff" stroke-width="1.8" fill="none"/><circle cx="2573.8" cy="1203.9" r="2.8" fill="#ffffff"/><path d="M2571 1206.9 L2557.7 1220.3 M2560 1213.5 l3 3 M2564 1209.5 l3 3 M2567.5 1206 l3 3" stroke="#ffffff" stroke-width="1.6" fill="none"/><text x="2578" y="1226.5" font-family="Liberation Sans" font-size="23" fill="#ffffff" textLength="21" lengthAdjust="spacingAndGlyphs">10</text><path d="M2655.1 1190.2 H2677 M2655.1 1217.7 H2677 M2646.7 1198.7 V1209.1 M2685.3 1198.7 V1209.1" stroke="#ffffff" stroke-width="2.2" fill="none"/><circle cx="2646.7" cy="1190.2" r="2.9" fill="#ffffff"/><circle cx="2685.3" cy="1190.2" r="2.9" fill="#ffffff"/><circle cx="2646.7" cy="1217.7" r="2.9" fill="#ffffff"/><circle cx="2685.3" cy="1217.7" r="2.9" fill="#ffffff"/></svg>
<div class="a grad" style="left:1070px;top:1250px;width:1810px;height:44px"></div>
<div class="a" style="left:1070px;top:1291px;width:1810px;height:4px;background:#a8a8a8;border-bottom:1.5px solid #333"></div>
<div class="a" style="left:1074px;top:1256px;width:28px;height:28px;border-radius:50%;background:#4b4b4b"></div>
<svg class="a" style="left:1074px;top:1256px" width="28" height="28"><path d="M9 9 L19 19 M19 9 L9 19" stroke="#fff" stroke-width="3.6"/></svg>
<div class="a title" style="left:1953px;top:1259.5px">Console</div>
<div class="a" style="left:1069px;top:1295px;width:1811px;height:463px;background:#fff;border-left:2px solid #333;border-bottom:2px solid #333;border-right:1.5px solid #444"></div>
<div class="a cons" style="left:1081px;top:1296px">Compile and preview finished.
Total rendering time: 0:00:00.255
Saved design &#x27;/Users/sanjeevprabhakar/Documents/Download/openscad/m10.scad&#x27;.
Loaded design &#x27;/Users/sanjeevprabhakar/Documents/Download/openscad/m10.scad&#x27;.
Compiling design (CSG Tree generation)...
Compiling design (CSG Products generation)...
Geometries in cache: 11003
Geometry cache size in bytes: 20455240
CGAL Polyhedrons in cache: 0
CGAL cache size in bytes: 0
Compiling design (CSG Products normalization)...
Normalized tree has 116 elements!
Compile and preview finished.
Total rendering time: 0:00:00.247</div>
<div class="a" style="left:2861px;top:1501px;width:16px;height:233px;border:1px solid #cfcfcf;border-radius:8px;background:#fff"></div>
<div class="a" style="left:0;top:1758px;width:2880px;height:42px;background:linear-gradient(#ebebeb,#b6b6b6)"></div>
<div class="a stat" style="left:6px;top:1765.5px">Viewport: translate = [ -9.96 -8.46 12.80 ], rotate = [ 51.80 0.00 231.50 ], distance = 133.75, fov = 22.50 (905x557)</div>
<div class="a stat" style="right:6px;top:1766px;font-size:27.2px">OpenSCAD 2021.09.29 (git ea97f8595)</div></body></html>
